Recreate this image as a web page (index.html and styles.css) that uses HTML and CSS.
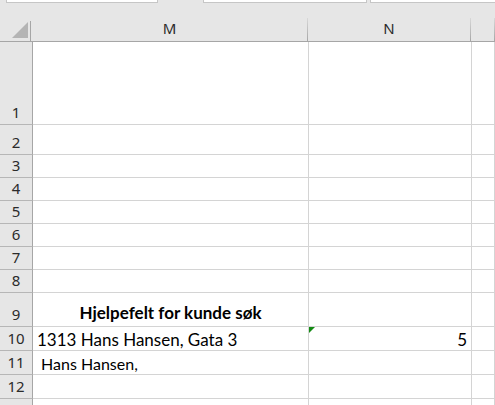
FILE: index.html
```html
<!DOCTYPE html>
<html lang="no">
<head>
    <meta charset="UTF-8">
    <title>Hjelpefelt</title>
    <link rel="stylesheet" href="styles.css">
</head>
<body>

    <!-- Faner øverst -->
    <div class="topbar">
        <div class="box box-a"></div>
        <div class="box box-b"></div>
        <div class="box box-c"></div>
    </div>

    <!-- Kolonneoverskrifter -->
    <div class="colheads">
        <div class="corner">
            <svg width="16" height="16" viewBox="0 0 16 16"><polygon points="16,0 16,16 0,16" fill="#b4b4b4"/></svg>
        </div>
        <div class="colhead col-m">M</div>
        <div class="colhead col-n">N</div>
        <div class="colhead col-rest"></div>
    </div>

    <!-- Rader -->
    <div class="row r-1"><div class="rowhead">1</div><div class="cell col-m"></div><div class="cell col-n"></div><div class="cell col-rest"></div></div>
    <div class="row r-2"><div class="rowhead">2</div><div class="cell col-m"></div><div class="cell col-n"></div><div class="cell col-rest"></div></div>
    <div class="row"><div class="rowhead">3</div><div class="cell col-m"></div><div class="cell col-n"></div><div class="cell col-rest"></div></div>
    <div class="row"><div class="rowhead">4</div><div class="cell col-m"></div><div class="cell col-n"></div><div class="cell col-rest"></div></div>
    <div class="row"><div class="rowhead">5</div><div class="cell col-m"></div><div class="cell col-n"></div><div class="cell col-rest"></div></div>
    <div class="row"><div class="rowhead">6</div><div class="cell col-m"></div><div class="cell col-n"></div><div class="cell col-rest"></div></div>
    <div class="row"><div class="rowhead">7</div><div class="cell col-m"></div><div class="cell col-n"></div><div class="cell col-rest"></div></div>
    <div class="row"><div class="rowhead">8</div><div class="cell col-m"></div><div class="cell col-n"></div><div class="cell col-rest"></div></div>
    <div class="row r-9">
        <div class="rowhead">9</div>
        <div class="cell col-m center bold">Hjelpefelt for kunde søk</div>
        <div class="cell col-n"></div>
        <div class="cell col-rest"></div>
    </div>
    <div class="row r-10">
        <div class="rowhead">10</div>
        <div class="cell col-m big">1313 Hans Hansen, Gata 3</div>
        <div class="cell col-n big right"><span class="flag"></span>5</div>
        <div class="cell col-rest"></div>
    </div>
    <div class="row r-11">
        <div class="rowhead">11</div>
        <div class="cell col-m">&nbsp;Hans Hansen,</div>
        <div class="cell col-n"></div>
        <div class="cell col-rest"></div>
    </div>
    <div class="row r-11"><div class="rowhead">12</div><div class="cell col-m"></div><div class="cell col-n"></div><div class="cell col-rest"></div></div>
    <div class="row r-11"><div class="rowhead"></div><div class="cell col-m"></div><div class="cell col-n"></div><div class="cell col-rest"></div></div>

</body>
</html>
```

FILE: styles.css
```css
body {
    margin: 0;
    background-color: #fff;
    font-family: Lato, "Liberation Sans", sans-serif;
    color: #000;
    overflow: hidden;
    width: 495px;
    height: 405px;
}
/* Faner */
.topbar {
    display: flex;
    height: 3px;
    background-color: #e6e6e6;
}
.box {
    height: 2px;
    background-color: #fff;
    border: 1px solid #c6c6c6;
    border-top: none;
}
.box-a {
    margin-left: 6px;
    width: 150px;
}
.box-b {
    margin-left: 45px;
    width: 162px;
}
.box-c {
    margin-left: 3px;
    flex: 1;
    border-right: none;
}
/* Kolonneoverskrifter */
.colheads {
    display: flex;
    height: 38px;
    background-color: #e6e6e6;
    border-bottom: 1px solid #a6a6a6;
    font-family: "Noto Sans", sans-serif;
    font-size: 15px;
    color: #2b2b2b;
}
.corner {
    width: 32px;
    flex: none;
    display: flex;
    justify-content: flex-end;
    align-items: flex-end;
    padding: 0 3px 3px 0;
    box-sizing: border-box;
    background: linear-gradient(#a6a6a6, #a6a6a6) no-repeat right bottom / 1px 20px;
    border-right: 1px solid transparent;
}
.colhead {
    display: flex;
    justify-content: center;
    align-items: flex-end;
    padding-bottom: 3px;
    box-sizing: border-box;
    border-right: 1px solid transparent;
    background: linear-gradient(to bottom, #d8d8d8, #a6a6a6) no-repeat right bottom / 1px 23px;
    background-origin: border-box;
}
.col-m {
    width: 276px;
    flex: none;
    box-sizing: border-box;
}
.col-n {
    width: 163px;
    flex: none;
    box-sizing: border-box;
}
.col-rest {
    flex: 1;
}
/* Rader */
.row {
    display: flex;
    height: 23px;
}
.r-1 {
    height: 83px;
}
.r-2 {
    height: 30px;
}
.r-9 {
    height: 34px;
}
.r-10,
.r-11 {
    height: 24px;
}
.rowhead {
    width: 33px;
    flex: none;
    box-sizing: border-box;
    background-color: #e6e6e6;
    border-right: 1px solid #a6a6a6;
    border-bottom: 1px solid #b6b6b6;
    display: flex;
    justify-content: center;
    align-items: flex-end;
    padding-bottom: 2px;
    font-family: "Noto Sans", sans-serif;
    font-size: 15px;
    color: #2b2b2b;
}
.cell {
    box-sizing: border-box;
    border-right: 1px solid #d4d4d4;
    border-bottom: 1px solid #d4d4d4;
    display: flex;
    align-items: flex-end;
    padding: 0 4px 1px;
    font-size: 16px;
    white-space: nowrap;
    position: relative;
}
.big {
    font-size: 17px;
    padding-bottom: 0;
}
.center {
    justify-content: center;
}
.right {
    justify-content: flex-end;
}
.bold {
    font-weight: bold;
    font-size: 17px;
    padding-bottom: 3px;
}
/* Grønn trekant for feilmarkering */
.flag {
    position: absolute;
    left: 0;
    top: 0;
    width: 0;
    height: 0;
    border-top: 6px solid #138a13;
    border-right: 6px solid transparent;
}
```
